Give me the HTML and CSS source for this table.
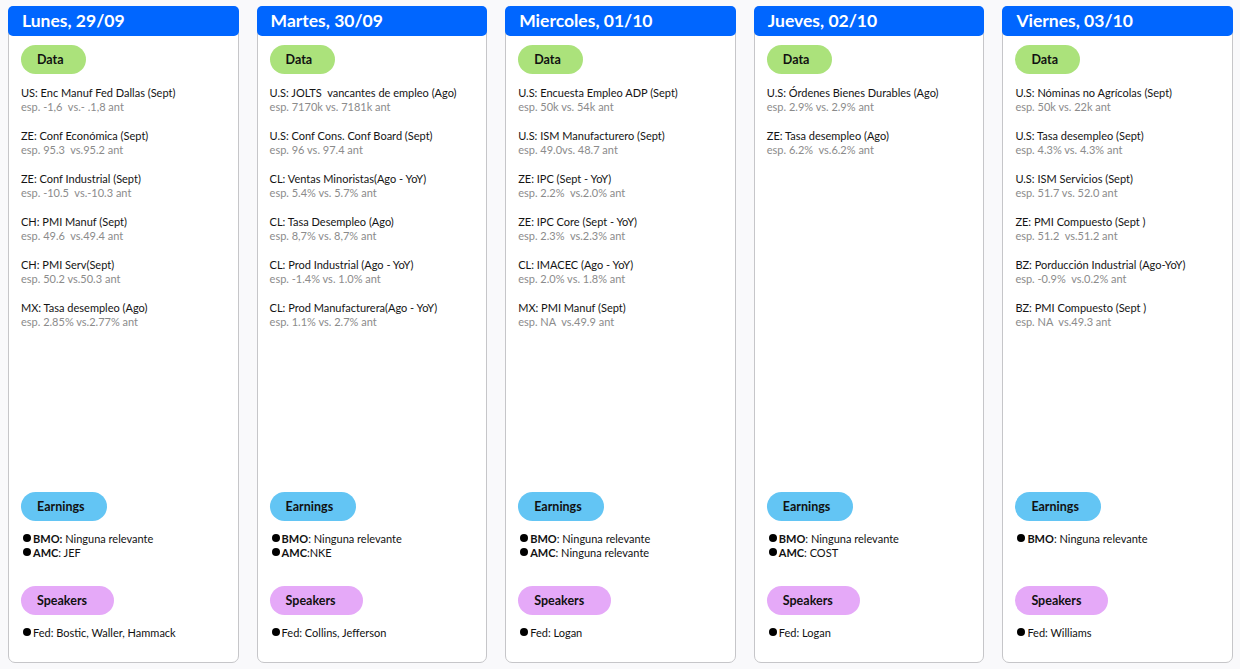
FILE: index.html
```html
<!DOCTYPE html>
<html lang="es">
<head>
<meta charset="utf-8">
<title>Calendario semanal</title>
<link rel="stylesheet" href="styles.css">
</head>
<body>
<main class="week">
  <section class="day">
    <h2 class="day-head">Lunes, 29/09</h2>
    <div class="day-body">
      <div class="data">
        <span class="pill pill-data">Data</span>
        <ul class="events">
          <li><span class="ev">US: Enc Manuf Fed Dallas (Sept)</span><span class="esp">esp. -1,6  vs.- .1,8 ant</span></li>
          <li><span class="ev">ZE: Conf Económica (Sept)</span><span class="esp">esp. 95.3  vs.95.2 ant</span></li>
          <li><span class="ev">ZE: Conf Industrial (Sept)</span><span class="esp">esp. -10.5  vs.-10.3 ant</span></li>
          <li><span class="ev">CH: PMI Manuf (Sept)</span><span class="esp">esp. 49.6  vs.49.4 ant</span></li>
          <li><span class="ev">CH: PMI Serv(Sept)</span><span class="esp">esp. 50.2 vs.50.3 ant</span></li>
          <li><span class="ev">MX: Tasa desempleo (Ago)</span><span class="esp">esp. 2.85% vs.2.77% ant</span></li>
        </ul>
      </div>
      <div class="earnings">
        <span class="pill pill-earn">Earnings</span>
        <ul class="bullets">
          <li><b>BMO:</b> Ninguna relevante</li>
          <li><b>AMC</b>: JEF</li>
        </ul>
      </div>
      <div class="speakers">
        <span class="pill pill-speak">Speakers</span>
        <ul class="bullets">
          <li>Fed: Bostic, Waller, Hammack</li>
        </ul>
      </div>
    </div>
  </section>

  <section class="day">
    <h2 class="day-head">Martes, 30/09</h2>
    <div class="day-body">
      <div class="data">
        <span class="pill pill-data">Data</span>
        <ul class="events">
          <li><span class="ev">U.S: JOLTS  vancantes de empleo (Ago)</span><span class="esp">esp. 7170k vs. 7181k ant</span></li>
          <li><span class="ev">U.S: Conf Cons. Conf Board (Sept)</span><span class="esp">esp. 96 vs. 97.4 ant</span></li>
          <li><span class="ev">CL: Ventas Minoristas(Ago - YoY)</span><span class="esp">esp. 5.4% vs. 5.7% ant</span></li>
          <li><span class="ev">CL: Tasa Desempleo (Ago)</span><span class="esp">esp. 8,7% vs. 8,7% ant</span></li>
          <li><span class="ev">CL: Prod Industrial (Ago - YoY)</span><span class="esp">esp. -1.4% vs. 1.0% ant</span></li>
          <li><span class="ev">CL: Prod Manufacturera(Ago - YoY)</span><span class="esp">esp. 1.1% vs. 2.7% ant</span></li>
        </ul>
      </div>
      <div class="earnings">
        <span class="pill pill-earn">Earnings</span>
        <ul class="bullets">
          <li><b>BMO</b>: Ninguna relevante</li>
          <li><b>AMC</b>:NKE</li>
        </ul>
      </div>
      <div class="speakers">
        <span class="pill pill-speak">Speakers</span>
        <ul class="bullets">
          <li>Fed: Collins, Jefferson</li>
        </ul>
      </div>
    </div>
  </section>

  <section class="day">
    <h2 class="day-head">Miercoles, 01/10</h2>
    <div class="day-body">
      <div class="data">
        <span class="pill pill-data">Data</span>
        <ul class="events">
          <li><span class="ev">U.S: Encuesta Empleo ADP (Sept)</span><span class="esp">esp. 50k vs. 54k ant</span></li>
          <li><span class="ev">U.S: ISM Manufacturero (Sept)</span><span class="esp">esp. 49.0vs. 48.7 ant</span></li>
          <li><span class="ev">ZE: IPC (Sept - YoY)</span><span class="esp">esp. 2.2%  vs.2.0% ant</span></li>
          <li><span class="ev">ZE: IPC Core (Sept - YoY)</span><span class="esp">esp. 2.3%  vs.2.3% ant</span></li>
          <li><span class="ev">CL: IMACEC (Ago - YoY)</span><span class="esp">esp. 2.0% vs. 1.8% ant</span></li>
          <li><span class="ev">MX: PMI Manuf (Sept)</span><span class="esp">esp. NA  vs.49.9 ant</span></li>
        </ul>
      </div>
      <div class="earnings">
        <span class="pill pill-earn">Earnings</span>
        <ul class="bullets">
          <li><b>BMO</b>: Ninguna relevante</li>
          <li><b>AMC</b>: Ninguna relevante</li>
        </ul>
      </div>
      <div class="speakers">
        <span class="pill pill-speak">Speakers</span>
        <ul class="bullets">
          <li>Fed: Logan</li>
        </ul>
      </div>
    </div>
  </section>

  <section class="day">
    <h2 class="day-head">Jueves, 02/10</h2>
    <div class="day-body">
      <div class="data">
        <span class="pill pill-data">Data</span>
        <ul class="events">
          <li><span class="ev">U.S: Órdenes Bienes Durables (Ago)</span><span class="esp">esp. 2.9% vs. 2.9% ant</span></li>
          <li><span class="ev">ZE: Tasa desempleo (Ago)</span><span class="esp">esp. 6.2%  vs.6.2% ant</span></li>
        </ul>
      </div>
      <div class="earnings">
        <span class="pill pill-earn">Earnings</span>
        <ul class="bullets">
          <li><b>BMO</b>: Ninguna relevante</li>
          <li><b>AMC</b>: COST</li>
        </ul>
      </div>
      <div class="speakers">
        <span class="pill pill-speak">Speakers</span>
        <ul class="bullets">
          <li>Fed: Logan</li>
        </ul>
      </div>
    </div>
  </section>

  <section class="day">
    <h2 class="day-head">Viernes, 03/10</h2>
    <div class="day-body">
      <div class="data">
        <span class="pill pill-data">Data</span>
        <ul class="events">
          <li><span class="ev">U.S: Nóminas no Agrícolas (Sept)</span><span class="esp">esp. 50k vs. 22k ant</span></li>
          <li><span class="ev">U.S: Tasa desempleo (Sept)</span><span class="esp">esp. 4.3% vs. 4.3% ant</span></li>
          <li><span class="ev">U.S: ISM Servicios (Sept)</span><span class="esp">esp. 51.7 vs. 52.0 ant</span></li>
          <li><span class="ev">ZE: PMI Compuesto (Sept )</span><span class="esp">esp. 51.2  vs.51.2 ant</span></li>
          <li><span class="ev">BZ: Porducción Industrial (Ago-YoY)</span><span class="esp">esp. -0.9%  vs.0.2% ant</span></li>
          <li><span class="ev">BZ: PMI Compuesto (Sept )</span><span class="esp">esp. NA  vs.49.3 ant</span></li>
        </ul>
      </div>
      <div class="earnings">
        <span class="pill pill-earn">Earnings</span>
        <ul class="bullets">
          <li><b>BMO</b>: Ninguna relevante</li>
        </ul>
      </div>
      <div class="speakers">
        <span class="pill pill-speak">Speakers</span>
        <ul class="bullets">
          <li>Fed: Williams</li>
        </ul>
      </div>
    </div>
  </section>
</main>
</body>
</html>
```

FILE: styles.css
```css
* { box-sizing: border-box; }

html, body {
  margin: 0;
  padding: 0;
  background: #f9f9fb;
  font-family: "Lato", "Open Sans", sans-serif;
  color: #111;
}

.week {
  display: flex;
  gap: 18px;
  padding: 6px 7px 6px 8px;
  height: 669px;
}

.day {
  flex: 1 1 0;
  display: flex;
  flex-direction: column;
  background: #fff;
  border: 1px solid #c6c6c9;
  border-radius: 7px;
  height: 657px;
}

.day-head {
  margin: -1px -1px 0 -1px;
  height: 30px;
  background: #0066ff;
  color: #fff;
  border-radius: 5px;
  font-size: 17.5px;
  font-weight: 700;
  line-height: 30px;
  padding-left: 14px;
}

.day-body {
  flex: 1;
  display: flex;
  flex-direction: column;
  padding: 9px 12px 22px 12px;
}

.data {
  flex: 1;
}

.pill {
  display: inline-block;
  height: 29px;
  line-height: 29px;
  border-radius: 15px;
  font-size: 12.5px;
  font-weight: 700;
  color: #111;
  padding-left: 16px;
}

.pill-data { background: #abe27b; width: 65px; }
.pill-earn { background: #63c5f4; width: 86px; }
.pill-speak { background: #e5a9f8; width: 93px; }

.events {
  list-style: none;
  margin: 12px 0 0 0;
  padding: 0;
  display: flex;
  flex-direction: column;
  gap: 15px;
}

.events li {
  display: flex;
  flex-direction: column;
  font-size: 11px;
  line-height: 14px;
}

.ev { color: #141414; white-space: pre; }
.esp { color: #8b8b8b; white-space: pre; }

.bullets {
  list-style: none;
  margin: 11px 0 0 0;
  padding: 0;
  font-size: 11px;
  line-height: 14px;
  color: #111;
}

.earnings .bullets {
  height: 28px;
  margin-bottom: 26px;
}

.bullets li {
  display: flex;
  align-items: baseline;
  white-space: pre;
}

.bullets li::before {
  content: "";
  width: 8px;
  height: 8px;
  border-radius: 50%;
  background: #000;
  margin-left: 2px;
  margin-right: 2px;
  flex: none;
  position: relative;
  top: -1px;
}

.bullets b { font-weight: 700; }
```
